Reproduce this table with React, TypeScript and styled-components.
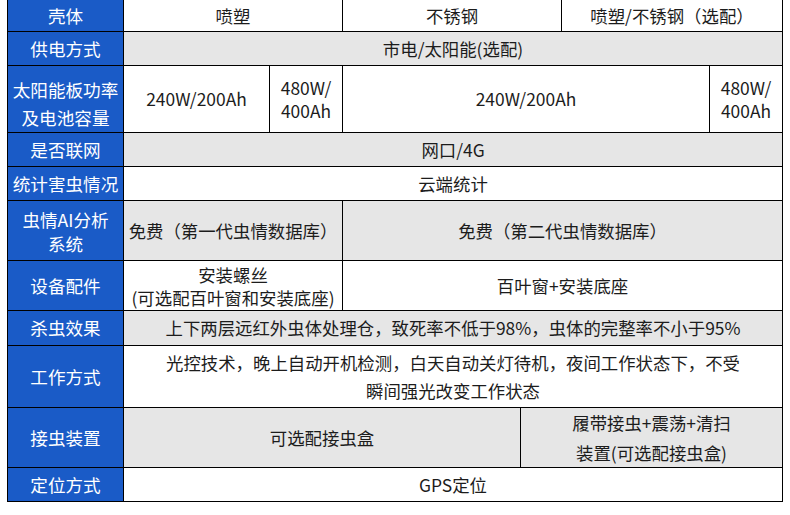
import React from "react";
import styled, { createGlobalStyle } from "styled-components";

const Global = createGlobalStyle`
  html, body { margin: 0; padding: 0; background: #ffffff; }
  body { font-family: "Noto Sans CJK SC", "Noto Sans", sans-serif; }
`;

const Page = styled.div`
  padding-left: 7px;
`;

const Sheet = styled.div`
  display: grid;
  grid-template-columns: 115px 145px 72px 177px 40px 147px 72px;
  grid-template-rows: 31px 33px 66px 33px 33px 59px 49px 34px 61px 59px 33px;
  gap: 1px;
  width: max-content;
  background: #000000;
  padding: 0 1px 1px 1px;
`;

const Label = styled.div<{ $row: number; $lh: number; $pt: number }>`
  grid-column: 1 / 2;
  grid-row: ${(p) => p.$row};
  background: #1a5bc7;
  color: #ffffff;
  font-size: 17.6px;
  line-height: ${(p) => p.$lh}px;
  padding-top: ${(p) => p.$pt}px;
  box-sizing: border-box;
  display: flex;
  flex-direction: column;
  align-items: center;
  justify-content: center;
  text-align: center;
  white-space: nowrap;
`;

const Cell = styled.div<{ $row: number; $from: number; $to: number; $shade: boolean; $lh: number }>`
  grid-column: ${(p) => p.$from} / ${(p) => p.$to};
  grid-row: ${(p) => p.$row};
  background: ${(p) => (p.$shade ? "#e6e6e6" : "#ffffff")};
  color: #1c1c1c;
  font-size: 17.4px;
  line-height: ${(p) => p.$lh}px;
  display: flex;
  flex-direction: column;
  align-items: center;
  justify-content: center;
  text-align: center;
  white-space: nowrap;
`;

const Line = styled.span`
  display: block;
`;

type CellData = { lines: string[]; from: number; to: number; lh?: number };
type RowData = { label: string[]; lh?: number; pt?: number; cells: CellData[] };

const rows: RowData[] = [
  {
    label: ["壳体"],
    cells: [
      { lines: ["喷塑"], from: 2, to: 4 },
      { lines: ["不锈钢"], from: 4, to: 6 },
      { lines: ["喷塑/不锈钢（选配）"], from: 6, to: 8 },
    ],
  },
  { label: ["供电方式"], cells: [{ lines: ["市电/太阳能(选配)"], from: 2, to: 8 }] },
  {
    label: ["太阳能板功率", "及电池容量"],
    lh: 28,
    pt: 10,
    cells: [
      { lines: ["240W/200Ah"], from: 2, to: 3 },
      { lines: ["480W/", "400Ah"], from: 3, to: 4, lh: 23 },
      { lines: ["240W/200Ah"], from: 4, to: 7 },
      { lines: ["480W/", "400Ah"], from: 7, to: 8, lh: 23 },
    ],
  },
  { label: ["是否联网"], cells: [{ lines: ["网口/4G"], from: 2, to: 8 }] },
  { label: ["统计害虫情况"], cells: [{ lines: ["云端统计"], from: 2, to: 8 }] },
  {
    label: ["虫情AI分析", "系统"],
    lh: 24,
    pt: 3,
    cells: [
      { lines: ["免费（第一代虫情数据库）"], from: 2, to: 4 },
      { lines: ["免费（第二代虫情数据库）"], from: 4, to: 8 },
    ],
  },
  {
    label: ["设备配件"],
    cells: [
      { lines: ["安装螺丝", "(可选配百叶窗和安装底座)"], from: 2, to: 4, lh: 23 },
      { lines: ["百叶窗+安装底座"], from: 4, to: 8 },
    ],
  },
  {
    label: ["杀虫效果"],
    cells: [
      { lines: ["上下两层远红外虫体处理仓，致死率不低于98%，虫体的完整率不小于95%"], from: 2, to: 8 },
    ],
  },
  {
    label: ["工作方式"],
    cells: [
      {
        lines: ["光控技术，晚上自动开机检测，白天自动关灯待机，夜间工作状态下，不受", "瞬间强光改变工作状态"],
        from: 2,
        to: 8,
        lh: 28,
      },
    ],
  },
  {
    label: ["接虫装置"],
    cells: [
      { lines: ["可选配接虫盒"], from: 2, to: 5 },
      { lines: ["履带接虫+震荡+清扫", "装置(可选配接虫盒)"], from: 5, to: 8, lh: 30 },
    ],
  },
  { label: ["定位方式"], cells: [{ lines: ["GPS定位"], from: 2, to: 8 }] },
];

export default function App() {
  return (
    <Page>
      <Global />
      <Sheet>
        {rows.map((r, i) => {
          const row = i + 1;
          const shade = i % 2 === 1;
          return (
            <React.Fragment key={row}>
              <Label $row={row} $lh={r.lh ?? 24} $pt={r.pt ?? 0}>
                {r.label.map((t) => (
                  <Line key={t}>{t}</Line>
                ))}
              </Label>
              {r.cells.map((c, j) => (
                <Cell key={j} $row={row} $from={c.from} $to={c.to} $shade={shade} $lh={c.lh ?? 24}>
                  {c.lines.map((t) => (
                    <Line key={t}>{t}</Line>
                  ))}
                </Cell>
              ))}
            </React.Fragment>
          );
        })}
      </Sheet>
    </Page>
  );
}
